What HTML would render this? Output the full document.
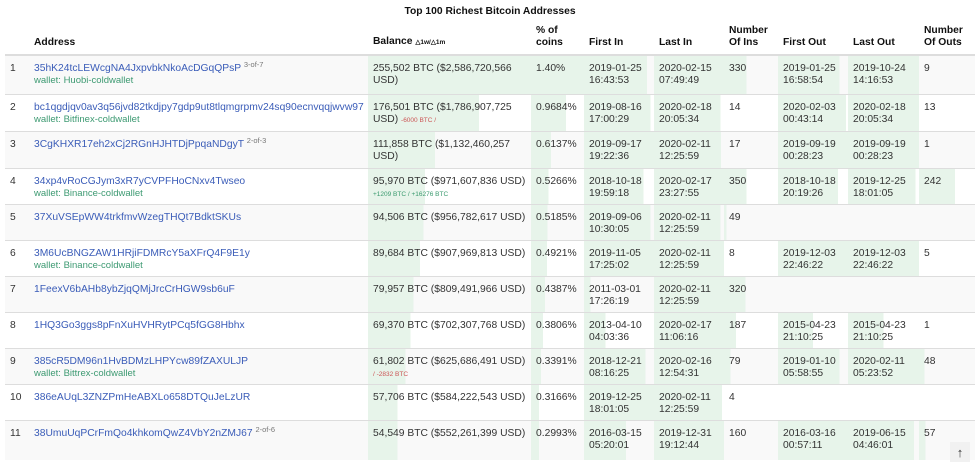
<!DOCTYPE html>
<html><head><meta charset="utf-8"><style>
body{margin:0;background:#fff;font-family:"Liberation Sans",Arial,sans-serif;font-size:10.3px;color:#333;width:980px;height:462px;overflow:hidden;position:relative}
h1{margin:0;position:absolute;top:6px;left:0;width:980px;text-align:center;font-size:10.3px;font-weight:bold;color:#111}
table{position:absolute;left:5px;top:25px;border-collapse:collapse;table-layout:fixed;width:970px}
th{font-weight:bold;text-align:left;vertical-align:bottom;padding:0 5px 5px 5px;line-height:12px;height:20px;border-bottom:2px solid #ddd;color:#111}
td{vertical-align:top;padding:7px 5px 0 5px;line-height:12px;border-top:1px solid #ddd;white-space:nowrap;overflow:hidden}
tr.o td{background-color:#f9f9f9}
a{color:#3a5cb8;text-decoration:none}
.w{color:#3d9a72;font-size:9.5px;line-height:12px}
sup{color:#777;font-size:7.5px;vertical-align:4px;line-height:0}
.d{font-size:6.5px;line-height:10px}
.r{color:#c55}.g{color:#3a9a6e}
.tri{font-size:6.5px;font-weight:bold}
#up{position:absolute;left:950px;top:442px;width:20px;height:20px;background:#f1f1f1;text-align:center;font-size:13px;line-height:22px;color:#333}
</style></head><body>
<h1>Top 100 Richest Bitcoin Addresses</h1>
<table>
<colgroup><col style="width:24px"><col style="width:339px"><col style="width:163px"><col style="width:53px"><col style="width:70px"><col style="width:70px"><col style="width:54px"><col style="width:70px"><col style="width:71px"><col style="width:56px"></colgroup>
<tr><th></th><th>Address</th><th>Balance <span class="tri">△1w/△1m</span></th><th>% of<br>coins</th><th>First In</th><th>Last In</th><th>Number<br>Of Ins</th><th>First Out</th><th>Last Out</th><th>Number<br>Of Outs</th></tr>
</table>
<script>
const G='#e7f4ea';
const rows=[
["1","35hK24tcLEWcgNA4JxpvbkNkoAcDGqQPsP","3-of-7","Huobi-coldwallet","255,502 BTC ($2,586,720,566<br>USD)","","1.40%","2019-01-25<br>16:43:53","2020-02-15<br>07:49:49","330","2019-01-25<br>16:58:54","2019-10-24<br>14:16:53","9",[100,100,90,100,42,88,100,0],39],
["2","bc1qgdjqv0av3q56jvd82tkdjpy7gdp9ut8tlqmgrpmv24sq90ecnvqqjwvw97","","Bitfinex-coldwallet","176,501 BTC ($1,786,907,725<br>USD) <span class='d r'>-6000 BTC /</span>","","0.9684%","2019-08-16<br>17:00:29","2020-02-18<br>20:05:34","14","2020-02-03<br>00:43:14","2020-02-18<br>20:05:34","13",[68,66,95,95,0,97,100,0],37],
["3","3CgKHXR17eh2xCj2RGnHJHTDjPpqaNDgyT","2-of-3","","111,858 BTC ($1,132,460,257<br>USD)","","0.6137%","2019-09-17<br>19:22:36","2020-02-11<br>12:25:59","17","2019-09-19<br>00:28:23","2019-09-19<br>00:28:23","1",[41,38,100,96,0,100,100,0],37],
["4","34xp4vRoCGJym3xR7yCVPFHoCNxv4Twseo","","Binance-coldwallet","95,970 BTC ($971,607,836 USD)<br><span class='d g'>+1209 BTC / +16276 BTC</span>","","0.5266%","2018-10-18<br>19:59:18","2020-02-17<br>23:27:55","350","2018-10-18<br>20:19:26","2019-12-25<br>18:01:05","242",[35,33,85,100,42,86,95,64],36],
["5","37XuVSEpWW4trkfmvWzegTHQt7BdktSKUs","","","94,506 BTC ($956,782,617 USD)","","0.5185%","2019-09-06<br>10:30:05","2020-02-11<br>12:25:59","49","","","",[34,31,95,95,5,0,0,0],36],
["6","3M6UcBNGZAW1HRjiFDMRcY5aXFrQ4F9E1y","","Binance-coldwallet","89,684 BTC ($907,969,813 USD)","","0.4921%","2019-11-05<br>17:25:02","2020-02-11<br>12:25:59","8","2019-12-03<br>22:46:22","2019-12-03<br>22:46:22","5",[32,30,100,100,0,100,100,0],36],
["7","1FeexV6bAHb8ybZjqQMjJrcCrHGW9sb6uF","","","79,957 BTC ($809,491,966 USD)","","0.4387%","2011-03-01<br>17:26:19","2020-02-11<br>12:25:59","320","","","",[28,26,9,100,40,0,0,0],36],
["8","1HQ3Go3ggs8pFnXuHVHRytPCq5fGG8Hbhx","","","69,370 BTC ($702,307,768 USD)","","0.3806%","2013-04-10<br>04:03:36","2020-02-17<br>11:06:16","187","2015-04-23<br>21:10:25","2015-04-23<br>21:10:25","1",[26,23,31,100,22,50,50,0],36],
["9","385cR5DM96n1HvBDMzLHPYcw89fZAXULJP","","Bittrex-coldwallet","61,802 BTC ($625,686,491 USD)<br><span class='d r'>/ -2832 BTC</span>","","0.3391%","2018-12-21<br>08:16:25","2020-02-16<br>12:54:31","79","2019-01-10<br>05:58:55","2020-02-11<br>05:23:52","48",[23,19,88,100,12,88,100,10],36],
["10","386eAUqL3ZNZPmHeABXLo658DTQuJeLzUR","","","57,706 BTC ($584,222,543 USD)","","0.3166%","2019-12-25<br>18:01:05","2020-02-11<br>12:25:59","4","","","",[18,15,100,97,0,0,0,0],36],
["11","38UmuUqPCrFmQo4khkomQwZ4VbY2nZMJ67","2-of-6","","54,549 BTC ($552,261,399 USD)","","0.2993%","2016-03-15<br>05:20:01","2019-12-31<br>19:12:44","160","2016-03-16<br>00:57:11","2019-06-15<br>04:46:01","57",[18,15,60,100,0,100,93,12],40]
];
const t=document.querySelector('table');
let h='';
rows.forEach((r,i)=>{
 const b=r[13];
 const bg=p=>p?`background-image:linear-gradient(to right,${G} ${p}%,transparent ${p}%)`:'';
 h+=`<tr class="${i%2==0?'o':''}" style="height:${r[14]}px"><td>${r[0]}</td><td><a>${r[1]}</a>${r[2]?` <sup>${r[2]}</sup>`:''}${r[3]?`<div class="w">wallet: ${r[3]}</div>`:''}</td>`+
 `<td style="${bg(b[0])}">${r[4]}</td><td style="${bg(b[1])}">${r[6]}</td><td style="${bg(b[2])}">${r[7]}</td><td style="${bg(b[3])}">${r[8]}</td><td style="${bg(b[4])}">${r[9]}</td><td style="${bg(b[5])}">${r[10]}</td><td style="${bg(b[6])}">${r[11]}</td><td style="${bg(b[7])}">${r[12]}</td></tr>`;
});
t.insertAdjacentHTML('beforeend',h);
</script>
<div id="up">↑</div>
</body></html>
